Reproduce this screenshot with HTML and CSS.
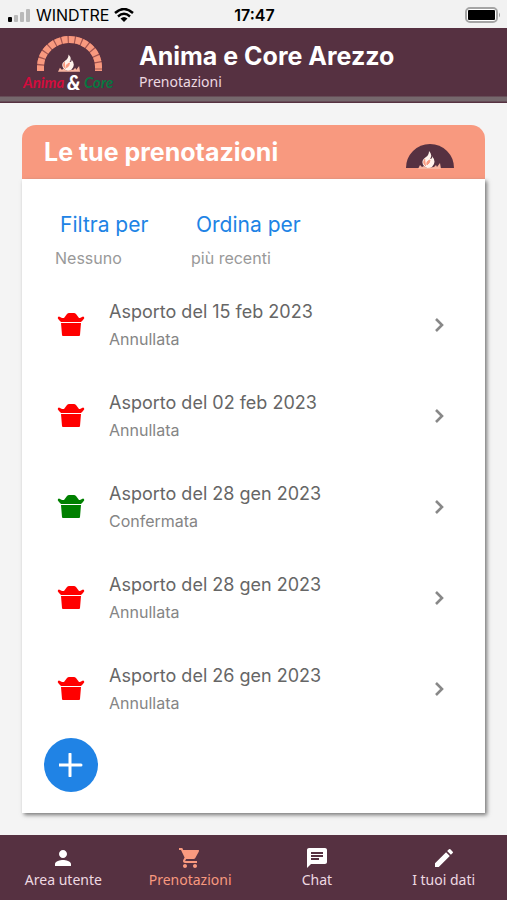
FILE: index.html
```html
<!DOCTYPE html>
<html lang="it">
<head>
<meta charset="utf-8">
<meta name="viewport" content="width=device-width, initial-scale=1">
<title>Anima e Core Arezzo</title>
<link rel="stylesheet" href="styles.css">
</head>
<body>
<svg class="defs" aria-hidden="true">
  <symbol id="bag" viewBox="0 0 28 24">
    <path d="M1 4Q2 3 3 4L5 5H7L10 1Q11 0 12 0H17Q18 0 19 1L22 5H23L25 4Q26 3 27 4Q28 5 26 7L24 9H4L2 7Q0 5 1 4Z"/>
    <path d="M4 10H24L23 22Q23 23 22 23H6Q5 23 5 22Z"/>
  </symbol>
  <symbol id="chevron" viewBox="0 0 24 24"><path d="M9 6l6 6-6 6" fill="none" stroke="currentColor" stroke-width="2.6"/></symbol>
  <symbol id="flame" viewBox="0 0 24 18">
    <path d="M11 0Q15 4 12 8Q15 8 14 5Q19 11 14 16Q10 19 6 15Q2 10 8 6Q11 4 11 0Z" fill="#fff3ec"/>
    <path d="M12 9Q8 10 9 14Q12 12 12 9M7 8Q4 12 8 15" fill="#f8997f" stroke="#f8997f" stroke-width="1"/>
    <path d="M0 18L2 14L4 16L6 15L9 17L16 16L18 14L19 16L22 12L23 18Z" fill="#f8b5a0"/>
  </symbol>
</svg>

<div class="status">
  <div class="carrier">
    <svg width="23" height="14" viewBox="0 0 23 14"><rect y="9" width="4" height="5" rx="1"/><g fill="#b9b9b9"><rect x="6" y="7" width="4" height="7" rx="1"/><rect x="12" y="4" width="4" height="10" rx="1"/><rect x="18" y="1" width="4" height="13" rx="1"/></g></svg>
    <span>WINDTRE</span>
    <svg width="20" height="14" viewBox="0 0 20 14"><g fill="none" stroke="#000" stroke-width="2.4"><path d="M1 5Q10-3 19 5M4 8.500Q10 3 16 8.500"/></g><path d="M6.500 10.500Q10 7.500 13.500 10.500L10 14Z"/></svg>
  </div>
  <span class="time">17:47</span>
  <svg class="battery" width="36" height="16" viewBox="0 0 36 16"><rect x="1" y="1" width="31" height="14" rx="4" fill="#fff" stroke="#a5a5a5" stroke-width="2"/><rect x="3" y="3" width="27" height="10" rx="1"/><path d="M34 5.500Q36 8 34 10.500Z" fill="#999"/></svg>
</div>

<header class="top">
  <svg class="logo" width="96" height="60" viewBox="0 0 96 60" role="img" aria-label="Anima &amp; Core">
    <path d="M17.500 35V31A29 27.500 0 0 1 75.500 31V35" fill="none" stroke="#a3544f" stroke-width="7"/>
    <path d="M17.500 35V31A29 27.500 0 0 1 75.500 31V35" fill="none" stroke="#f8997f" stroke-width="7" stroke-dasharray="5.600 1.200"/>
    <use href="#flame" x="35" y="18" width="23" height="18"/>
    <g class="brand">
      <text x="0" y="52" fill="#d30c3d">Anima</text>
      <text class="amp" x="44" y="54" fill="#fff">&amp;</text>
      <text x="61" y="52" fill="#087640">Core</text>
    </g>
  </svg>
  <div>
    <h1>Anima e Core Arezzo</h1>
    <p>Prenotazioni</p>
  </div>
</header>

<main>
  <section class="card">
    <div class="card-head">
      <h2>Le tue prenotazioni</h2>
      <svg width="50" height="26" viewBox="0 0 50 26"><path d="M1 25Q1 15 8 8Q15 1 25 1T42 8Q49 15 49 25Z" fill="#563141"/><use href="#flame" x="13" y="8" width="24" height="18"/></svg>
    </div>
    <div class="card-body">
      <div class="filters">
        <div><button type="button">Filtra per</button><p>Nessuno</p></div>
        <div><button type="button">Ordina per</button><p>più recenti</p></div>
      </div>
      <ul class="orders">
        <li><a href="#"><svg class="bag"><use href="#bag"/></svg><div><h3>Asporto del 15 feb 2023</h3><p>Annullata</p></div><svg class="chevron"><use href="#chevron"/></svg></a></li>
        <li><a href="#"><svg class="bag"><use href="#bag"/></svg><div><h3>Asporto del 02 feb 2023</h3><p>Annullata</p></div><svg class="chevron"><use href="#chevron"/></svg></a></li>
        <li><a href="#"><svg class="bag confirmed"><use href="#bag"/></svg><div><h3>Asporto del 28 gen 2023</h3><p>Confermata</p></div><svg class="chevron"><use href="#chevron"/></svg></a></li>
        <li><a href="#"><svg class="bag"><use href="#bag"/></svg><div><h3>Asporto del 28 gen 2023</h3><p>Annullata</p></div><svg class="chevron"><use href="#chevron"/></svg></a></li>
        <li><a href="#"><svg class="bag"><use href="#bag"/></svg><div><h3>Asporto del 26 gen 2023</h3><p>Annullata</p></div><svg class="chevron"><use href="#chevron"/></svg></a></li>
      </ul>
      <button class="add" type="button" aria-label="Nuova prenotazione"><svg width="24" height="24" viewBox="0 0 24 24"><path d="M11 1V23M0 12H22" stroke="#fff" stroke-width="3" stroke-linecap="round"/></svg></button>
    </div>
  </section>
</main>

<nav class="tabs">
  <a href="#"><svg viewBox="0 0 24 24"><path d="M12 12c2.210 0 4-1.790 4-4s-1.790-4-4-4-4 1.790-4 4 1.790 4 4 4zm0 2c-2.670 0-8 1.340-8 4v2h16v-2c0-2.660-5.330-4-8-4z"/></svg><span>Area utente</span></a>
  <a href="#" class="active"><svg viewBox="0 0 24 24"><path d="M7 18c-1.100 0-2 .9-2 2s.9 2 2 2 2-.9 2-2-.9-2-2-2zM1 2v2h2l3.600 7.590-1.350 2.450c-.16.280-.25.610-.25.960 0 1.100.9 2 2 2h12v-2H7.420c-.14 0-.25-.11-.25-.25l.03-.12.900-1.630h7.450c.75 0 1.410-.41 1.750-1.030l3.580-6.490A1 1 0 0 0 20 4H5.210l-.94-2H1zm16 16c-1.100 0-2 .9-2 2s.9 2 2 2 2-.9 2-2-.9-2-2-2z"/></svg><span>Prenotazioni</span></a>
  <a href="#"><svg viewBox="0 0 24 24"><path d="M20 2H4c-1.100 0-2 .9-2 2v18l4-4h14c1.100 0 2-.9 2-2V4c0-1.100-.9-2-2-2zM6 9h12v2H6V9zm8 5H6v-2h8v2zm4-6H6V6h12v2z"/></svg><span>Chat</span></a>
  <a href="#"><svg viewBox="0 0 24 24"><path d="M3 17.250V21h3.750L17.810 9.940l-3.750-3.750L3 17.250zM20.710 7.040a1 1 0 0 0 0-1.410l-2.340-2.340a1 1 0 0 0-1.410 0l-1.830 1.830 3.750 3.750 1.830-1.830z"/></svg><span>I tuoi dati</span></a>
</nav>
</body>
</html>
```
FILE: styles.css
```css
* { box-sizing: border-box; }
body {
  margin: 0;
  min-height: 100vh;
  display: flex;
  flex-direction: column;
  background: #f4f4f4;
  color: #666;
  font-family: Inter, "Liberation Sans", sans-serif;
}
h1, h2, h3, p, ul { margin: 0; padding: 0; }
a { color: inherit; text-decoration: none; }
button { border: 0; padding: 0; background: none; font: inherit; cursor: pointer; }
svg { flex: none; fill: currentColor; }
.defs { display: none; }

.status {
  display: grid;
  grid-template-columns: 1fr auto 1fr;
  align-items: center;
  height: 28px;
  padding: 2px 6px 0 8px;
  background: #f2f2f2;
  color: #000;
  font-size: 16px;
}
.carrier { display: flex; align-items: center; gap: 5px; }
.time { font-weight: 600; }
.battery { justify-self: end; }

.top {
  display: flex;
  gap: 20px;
  height: 75px;
  padding: 8px 23px 0;
  background: linear-gradient(#563141 68px, #75676c 69px, #75676c 73px, #563141 74px);
  color: #fff;
}
.brand {
  font-family: Lato, sans-serif;
  font-size: 15px;
  font-style: italic;
  font-weight: 700;
}
.brand .amp { font-size: 20px; font-weight: 900; }
h1 { font-size: 25px; line-height: 40px; font-weight: 700; }
.top p { color: #eed9e2; font: 14px/12px "Noto Sans", sans-serif; }

main { flex: 1; padding: 22px; }
.card { border-radius: 14px 14px 0 0; }
.card-head {
  display: flex;
  align-items: center;
  justify-content: space-between;
  height: 54px;
  padding: 0 30px 0 22px;
  border-radius: 14px 14px 0 0;
  background: #f8997f;
  color: #fff;
}
.card-head svg { align-self: flex-end; margin-bottom: 10px; }
h2 { font-size: 25px; line-height: 54px; font-weight: 700; }
.card-body {
  padding: 30px 22px 21px;
  background: #fff;
  box-shadow: 2px 2px 4px #777;
}
.filters { display: flex; padding-left: 11px; }
.filters div { width: 136px; }
.filters button { padding-left: 5px; color: #2083e5; font-size: 21px; line-height: 32px; }
.filters p { color: #999; font-size: 16px; line-height: 34px; }

.orders { padding-top: 4px; list-style: none; }
.orders a {
  display: flex;
  align-items: center;
  height: 91px;
  padding: 0 12px 0 13px;
}
.orders div { flex: 1; padding-left: 24px; }
.bag { width: 28px; height: 24px; color: #f00; }
.bag.confirmed { color: #008000; }
.chevron { width: 24px; height: 24px; color: #888; }
h3 { font-size: 18px; line-height: 28px; font-weight: 400; }
.orders p { color: #858585; font-size: 16px; line-height: 26px; }
.add {
  display: grid;
  place-items: center;
  width: 54px;
  height: 54px;
  margin-top: 4px;
  border-radius: 50%;
  background: #2083e5;
}

.tabs {
  display: grid;
  grid-template-columns: repeat(4, 1fr);
  height: 65px;
  background: #563141;
  color: #eed9e2;
  font: 14px/20px "Noto Sans", sans-serif;
}
.tabs a {
  display: flex;
  flex-direction: column;
  align-items: center;
  padding-top: 11px;
}
.tabs svg { width: 24px; height: 24px; color: #fff; }
.tabs .active, .tabs .active svg { color: #f8997f; }
```
